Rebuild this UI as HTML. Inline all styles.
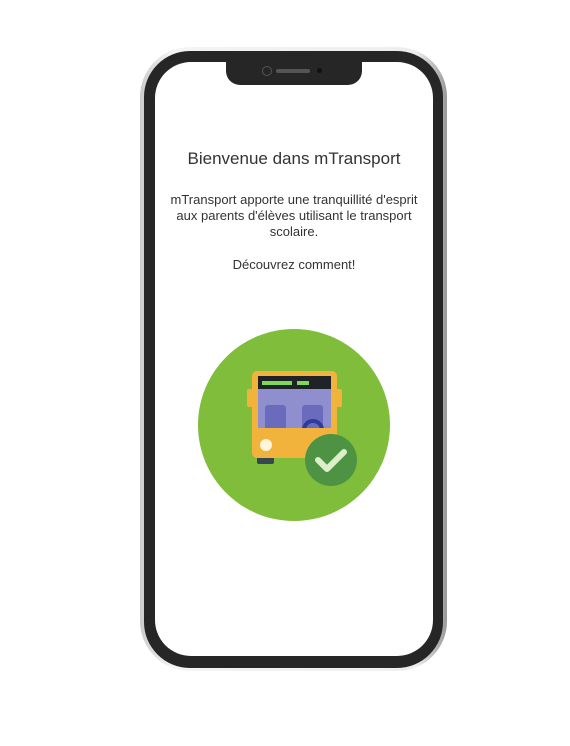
<!DOCTYPE html>
<html><head><style>
body{margin:0;width:570px;height:746px;background:#fff;position:relative;overflow:hidden;font-family:"Liberation Sans",sans-serif;}
.outer{position:absolute;left:140px;top:47px;width:307px;height:624px;border-radius:50px;background:linear-gradient(90deg,#ccc,#f4f4f4 10%,#eee 90%,#999);}
.frame{position:absolute;left:144px;top:51px;width:299px;height:617px;border-radius:46px;background:#262626;}
.screen{position:absolute;left:155px;top:62px;width:278px;height:594px;border-radius:36px;background:#fff;}
.notch{position:absolute;left:226px;top:60px;width:136px;height:25px;background:#262626;border-radius:0 0 14px 14px;}
.t{position:absolute;left:155px;width:278px;text-align:center;color:#333;}
</style></head><body>
<div class="outer"></div><div class="frame"></div><div class="screen"></div>
<div class="notch"><div style="position:absolute;left:36px;top:6px;width:8px;height:8px;border-radius:50%;border:1px solid #555"></div><div style="position:absolute;left:50px;top:9px;width:34px;height:4px;border-radius:2px;background:#555"></div><div style="position:absolute;left:91px;top:8px;width:5px;height:5px;border-radius:50%;background:#111"></div></div>
<div class="t" style="top:149px;font-size:17px;">Bienvenue dans mTransport</div>
<div class="t" style="top:192px;font-size:13px;line-height:16px;">mTransport apporte une tranquillité d'esprit<br>aux parents d'élèves utilisant le transport<br>scolaire.</div>
<div class="t" style="top:257px;font-size:13px;">Découvrez comment!</div>
<svg style="position:absolute;left:0;top:0" width="570" height="746">
<defs><clipPath id="w"><rect x="258" y="389" width="73" height="39"/></clipPath></defs>
<circle cx="294" cy="425" r="96" fill="#7fbd3a"/>
<rect x="247" y="389" width="8" height="18" rx="2" fill="#f2b33d"/>
<rect x="334" y="389" width="8" height="18" rx="2" fill="#f2b33d"/>
<rect x="257" y="450" width="17" height="14" rx="2" fill="#37474f"/>
<rect x="252" y="371" width="85" height="87" rx="5" fill="#f2b33d"/>
<rect x="258" y="376" width="73" height="13" fill="#1f2328"/>
<rect x="262" y="381" width="30" height="4" fill="#7ed957"/>
<rect x="297" y="381" width="12" height="4" fill="#7ed957"/>
<rect x="258" y="389" width="73" height="39" fill="#8f8fd0"/>
<g clip-path="url(#w)">
<rect x="265" y="405" width="21" height="30" rx="3" fill="#6a6bbd"/>
<rect x="302" y="405" width="21" height="30" rx="3" fill="#6a6bbd"/>
<circle cx="313" cy="430" r="9" fill="none" stroke="#2d3a9e" stroke-width="4"/>
</g>
<circle cx="266" cy="445" r="6" fill="#fff6dc"/>
<circle cx="331" cy="460" r="26" fill="#4e9343"/>
<path d="M318 460 L327 469 L344 452" fill="none" stroke="#dcefc8" stroke-width="6" stroke-linecap="round" stroke-linejoin="round"/>
</svg>
</body></html>
